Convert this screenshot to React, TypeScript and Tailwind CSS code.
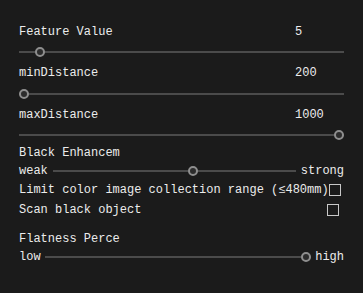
import React from 'react'

const font = { fontFamily: '"Liberation Mono", "DejaVu Sans Mono", monospace' }

function Track({ pct, className = '' }: { pct: number; className?: string }) {
  return (
    <div className={`relative h-[10px] flex items-center ${className}`}>
      <div className="h-[2px] w-full bg-[#4b4b4b]" />
      <div
        className="absolute top-0 h-[10px] w-[10px] rounded-full border-2 border-[#8e8e8e] bg-[#2c2c2c] -translate-x-1/2"
        style={{ left: `calc(5px + (100% - 10px) * ${pct})` }}
      />
    </div>
  )
}

function LabelRow({ label, value, h }: { label: string; value?: string; h: string }) {
  return (
    <div className={`flex items-center ${h}`}>
      <span className="w-[276px]">{label}</span>
      {value && <span>{value}</span>}
    </div>
  )
}

function Checkbox() {
  return <div className="w-[12px] h-[12px] border border-[#c8c8c8] shrink-0 mr-[5px]" />
}

export default function App() {
  return (
    <div className="w-[363px] h-[293px] bg-[#1b1b1b] text-[#ececec] text-[12px] leading-none" style={font}>
      <div className="pl-[19px] pr-[19px] pt-[22px] flex flex-col">
        <LabelRow label="Feature Value" value="5" h="h-[20px]" />
        <div className="h-[20px] flex items-center">
          <Track pct={0.05} className="w-full" />
        </div>
        <LabelRow label="minDistance" value="200" h="h-[21px]" />
        <div className="h-[21px] flex items-center">
          <Track pct={0} className="w-full" />
        </div>
        <LabelRow label="maxDistance" value="1000" h="h-[21px]" />
        <div className="h-[19px] flex items-center">
          <Track pct={1} className="w-full" />
        </div>
        <div className="h-[18px] flex items-center">
          <span className="w-[101px] overflow-hidden whitespace-nowrap">Black Enhancement</span>
        </div>
        <div className="h-[18px] flex items-center">
          <span>weak</span>
          <Track pct={0.58} className="flex-1 mx-[5px]" />
          <span>strong</span>
        </div>
        <div className="h-[20px] flex items-center justify-between">
          <span className="whitespace-nowrap">Limit color image collection range (≤480mm)</span>
          <Checkbox />
        </div>
        <div className="h-[20px] flex items-center justify-between">
          <span>Scan black object</span>
          <Checkbox />
        </div>
        <div className="h-[9px]" />
        <div className="h-[20px] flex items-center">
          <span className="w-[101px] overflow-hidden whitespace-nowrap">Flatness Percentage</span>
        </div>
        <div className="h-[16px] flex items-center">
          <span>low</span>
          <Track pct={1} className="flex-1 ml-[4px] mr-[4px]" />
          <span>high</span>
        </div>
      </div>
    </div>
  )
}
